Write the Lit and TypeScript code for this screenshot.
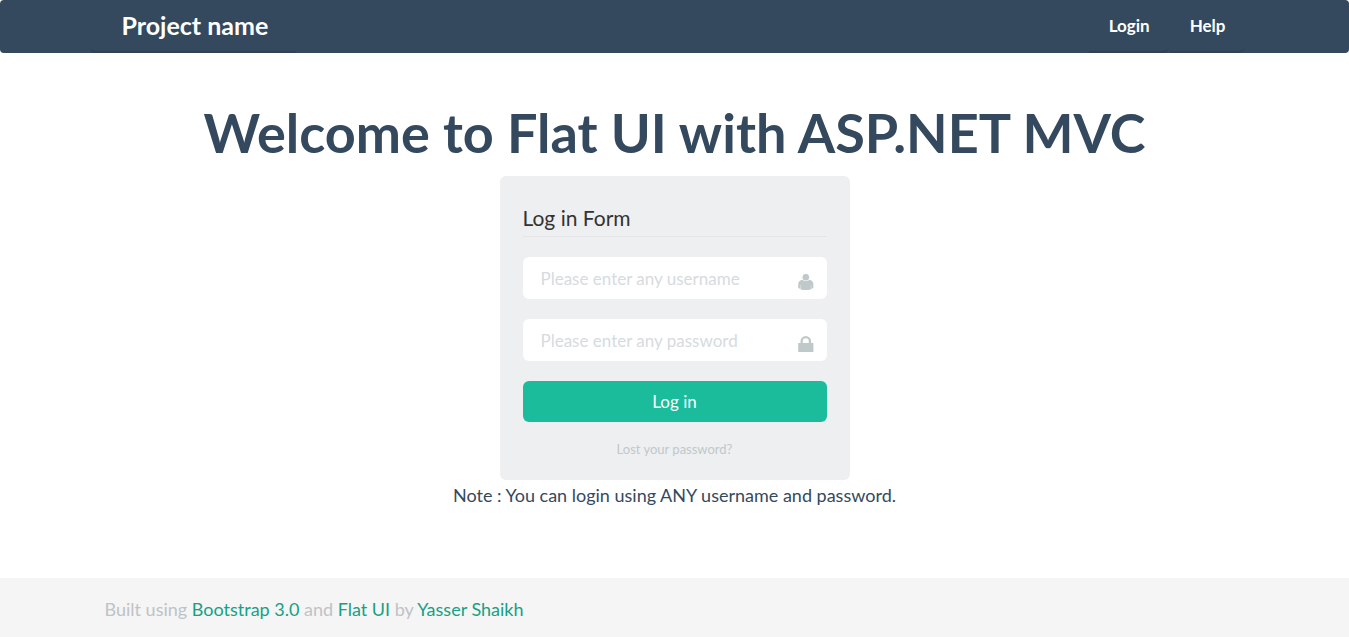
import { LitElement, html, css } from "lit";
import { customElement } from "lit/decorators.js";

@customElement("app-root")
export class AppRoot extends LitElement {
  static styles = css`
    :host {
      display: flex;
      flex-direction: column;
      min-height: 100vh;
      background: #fff;
      color: #34495e;
      font: 400 18px/26px Lato, "Liberation Sans", sans-serif;
    }
    * {
      box-sizing: border-box;
    }
    a {
      color: #16a085;
      text-decoration: none;
    }
    .navbar {
      background: #34495e;
      border-radius: 4px;
    }
    .container {
      width: 100%;
      max-width: 1170px;
      margin: 0 auto;
      padding: 0 15px;
    }
    .bar {
      display: flex;
      justify-content: space-between;
      padding: 0;
    }
    .brand,
    .link {
      color: #fff;
      font-weight: 700;
      height: 53px;
      border-bottom: 2px solid #2f4154;
    }
    .brand {
      font-size: 25px;
      line-height: 50px;
      padding: 0 28px 0 32px;
      border-radius: 0 0 0 6px;
    }
    .links {
      display: flex;
      gap: 1px;
      margin: 0;
      padding: 0 15px 0 0;
      list-style: none;
    }
    .link {
      display: block;
      font-size: 17px;
      line-height: 52px;
      padding: 0 19px 0 20px;
      border-radius: 0 0 6px 0;
    }
    main {
      flex: 1;
      text-align: center;
    }
    h1 {
      margin: 49px 0 12px;
      font-size: 54px;
      line-height: 62px;
      font-weight: 700;
    }
    .card {
      max-width: 350px;
      margin: 0 auto;
      padding: 29px 23px 20px;
      background: #edeff1;
      border-radius: 6px;
      display: flex;
      flex-direction: column;
      gap: 20px;
    }
    h2 {
      margin: 0;
      padding-bottom: 5px;
      border-bottom: 1px solid #e3e5e7;
      color: #333;
      text-align: left;
      font-size: 21px;
      line-height: 26px;
      font-weight: 400;
    }
    .field {
      display: flex;
      align-items: center;
      height: 42px;
      padding: 0 13px 0 18px;
      background: #fff;
      border-radius: 6px;
    }
    input {
      flex: 1;
      min-width: 0;
      padding: 2px 0 0;
      border: 0;
      outline: 0;
      background: none;
      color: #34495e;
      font: inherit;
      font-size: 17px;
    }
    input::placeholder {
      color: #d6dbdf;
      opacity: 1;
    }
    label {
      display: flex;
      padding-top: 8px;
    }
    .icon {
      width: 16px;
      height: 16px;
      fill: #bfc9ca;
    }
    button {
      height: 41px;
      border: 0;
      border-radius: 6px;
      background: #1abc9c;
      color: #fff;
      font: inherit;
      font-size: 17px;
      cursor: pointer;
    }
    .lost {
      color: #bfc9ca;
      font-size: 13px;
      line-height: 14px;
      align-self: center;
      padding-bottom: 4px;
    }
    .note {
      margin: 2px 0 0;
    }
    footer {
      padding: 18px 0 15px;
      background: #f5f5f5;
      color: #bdc3c7;
    }
  `;

  render() {
    return html`
      <nav class="navbar">
        <div class="container bar">
          <a class="brand" href="#">Project name</a>
          <ul class="links">
            <li><a class="link" href="#login">Login</a></li>
            <li><a class="link" href="#help">Help</a></li>
          </ul>
        </div>
      </nav>
      <main class="container">
        <h1>Welcome to Flat UI with ASP.NET MVC</h1>
        <form class="card" @submit=${(e: Event) => e.preventDefault()}>
          <h2>Log in Form</h2>
          <div class="field">
            <input id="user" type="text" aria-label="Username" placeholder="Please enter any username" />
            <label for="user">
              <svg class="icon" viewBox="0 0 16 16" aria-hidden="true">
                <circle cx="7.800" cy="3.200" r="3.300" />
                <path d="M4 5.800Q7.800 8.200 11.600 5.800Q15.400 6.800 15.400 10.500V13.700Q14.800 14.500 13.200 14.800V11H12.900V15.500Q7.800 16.500 2.700 15.500V11H2.400V14.800Q.8 14.500 .2 13.700V10.500Q.2 6.800 4 5.800Z" />
              </svg>
            </label>
          </div>
          <div class="field">
            <input id="pass" type="password" aria-label="Password" placeholder="Please enter any password" />
            <label for="pass">
              <svg class="icon" viewBox="0 0 16 16" aria-hidden="true">
                <path fill-rule="evenodd" d="M.2 7H2.500V5.300A5.300 5.300 0 0 1 13.100 5.300V7H15.400V16H.2ZM4.800 7H10.800V5.300A3 3 0 0 0 4.800 5.300Z" />
              </svg>
            </label>
          </div>
          <button type="submit">Log in</button>
          <a class="lost" href="#lost">Lost your password?</a>
        </form>
        <p class="note">Note : You can login using ANY username and password.</p>
      </main>
      <footer>
        <div class="container">
          Built using <a href="#bootstrap">Bootstrap 3.0</a> and <a href="#flat-ui">Flat UI</a> by
          <a href="#author">Yasser Shaikh</a>
        </div>
      </footer>
    `;
  }
}
